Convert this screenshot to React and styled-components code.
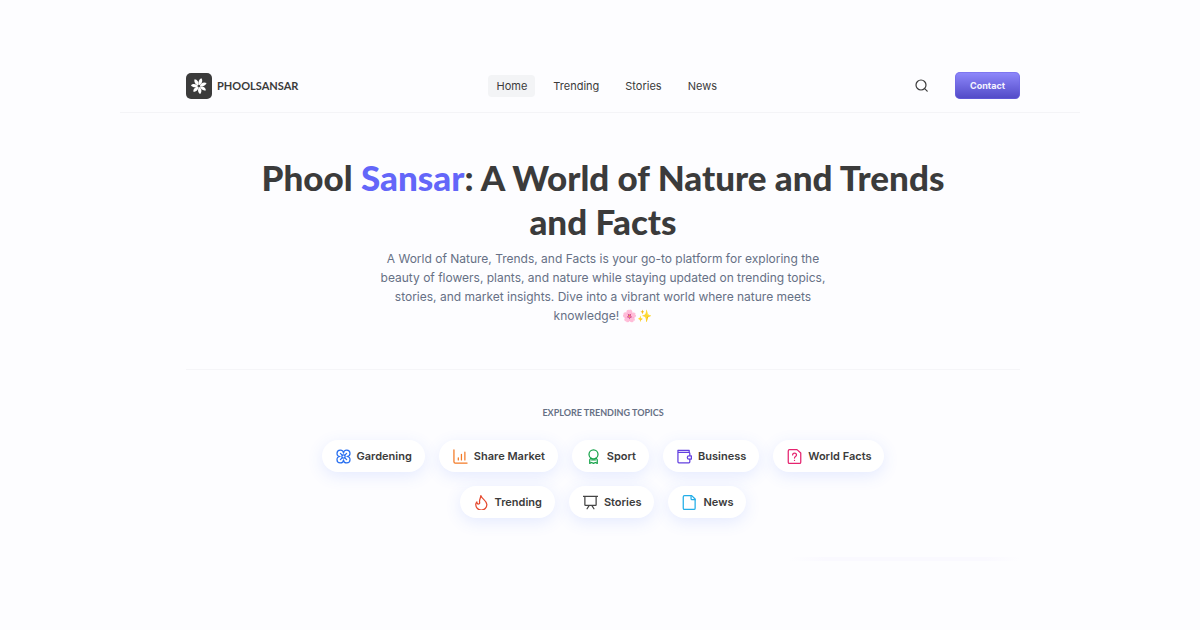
import React from "react";
import styled, { createGlobalStyle } from "styled-components";

const ink = "#3b3b3b";
const body = `"Inter", "Liberation Sans", sans-serif`;
const display = `"Lato", "Liberation Sans", sans-serif`;

const GlobalStyle = createGlobalStyle`
  * { box-sizing: border-box; }
  body {
    margin: 0;
    background: #fdfdff;
    color: ${ink};
    font-family: ${body};
  }
  a { color: inherit; text-decoration: none; }
`;

const Page = styled.div`
  width: 80%;
  margin: 0 auto;
  padding-top: 59px;
`;

const Header = styled.header`
  display: flex;
  align-items: center;
  justify-content: space-between;
  padding: 13px 60px 13px 66px;
  border-bottom: 1px solid #f4f4f7;
`;

const Brand = styled.a`
  display: flex;
  align-items: center;
  gap: 5px;
  font: 700 11px/16px ${display};
`;

const Logo = styled.span`
  display: grid;
  place-items: center;
  width: 26px;
  height: 26px;
  border-radius: 5px;
  background: ${ink};
`;

const Nav = styled.nav`
  display: flex;
  gap: 10px;
`;

const NavLink = styled.a`
  padding: 3px 8px;
  border-radius: 4px;
  font-size: 11px;
  line-height: 16px;
  background: ${(p) => (p.$active ? "#f3f4f6" : "transparent")};
`;

const Actions = styled.div`
  display: flex;
  align-items: center;
  gap: 27px;
`;

const IconButton = styled.button`
  display: flex;
  padding: 0;
  border: 0;
  background: none;
  color: ${ink};
  cursor: pointer;
`;

const ContactButton = styled.button`
  padding: 0 15px;
  height: 27px;
  border: 0;
  border-radius: 5px;
  background: linear-gradient(#8f89fc, #5149c6);
  box-shadow: inset 0 0 0 1px rgba(110, 100, 230, 0.5);
  color: #f5f4ff;
  font: 700 9px/14px ${body};
  cursor: pointer;
`;

const Content = styled.main`
  padding: 0 60px 0 66px;
`;

const Hero = styled.section`
  display: flex;
  flex-direction: column;
  align-items: center;
  gap: 6px;
  padding: 42px 0 44px;
  border-bottom: 1px solid #f5f5f8;
  text-align: center;
`;

const Title = styled.h1`
  max-width: 720px;
  margin: 0;
  font: 900 35px/44px ${display};
`;

const Accent = styled.span`
  color: #6366f9;
`;

const Lead = styled.p`
  max-width: 456px;
  margin: 0;
  color: #667085;
  font-size: 12px;
  line-height: 19px;
`;

const Topics = styled.section`
  display: flex;
  flex-direction: column;
  align-items: center;
  gap: 21px;
  padding: 37px 0 39px;
`;

const TopicsTitle = styled.h2`
  margin: 0;
  color: #667085;
  font: 700 9px/12px ${display};
  text-transform: uppercase;
`;

const ChipList = styled.ul`
  display: flex;
  flex-wrap: wrap;
  justify-content: center;
  gap: 14px;
  max-width: 600px;
  margin: 0;
  padding: 0;
  list-style: none;
`;

const Chip = styled.a`
  display: flex;
  align-items: center;
  gap: 6px;
  height: 32px;
  padding: 0 13px 0 14px;
  border-radius: 16px;
  background: #fff;
  box-shadow: 0 4px 16px rgba(60, 110, 255, 0.13);
  font-size: 11px;
  font-weight: 600;
  line-height: 16px;
`;

const ChipIcon = styled.svg`
  width: 15px;
  height: 15px;
  fill: none;
  stroke: ${(p) => p.$color};
  stroke-width: 2;
  stroke-linecap: round;
  stroke-linejoin: round;
`;

const NextPanelEdge = styled.div`
  width: 230px;
  height: 4px;
  margin-left: auto;
  background: linear-gradient(90deg, transparent, #faf9ff 15%, #faf9ff 85%, transparent);
`;

const topics = [
  {
    name: "Gardening",
    color: "#2970f0",
    icon: (
      <>
        <path d="M12 6.500A5.200 5.200 0 1 0 6.500 12A5.200 5.200 0 1 0 12 17.500A5.200 5.200 0 1 0 17.500 12A5.200 5.200 0 1 0 12 6.500Z" />
        <path d="M7 7l3 3M17 7l-3 3M7 17l3-3M17 17l-3-3" />
        <circle cx="12" cy="12" r="2.600" />
      </>
    ),
  },
  {
    name: "Share Market",
    color: "#f37a26",
    icon: <path d="M1.500 1.500v19a2 2 0 0 0 2 2h19M8.500 17.500v-3.500M13.500 17.500V8.500M19 17.500V5" />,
  },
  {
    name: "Sport",
    color: "#16a34a",
    icon: (
      <>
        <circle cx="12" cy="8.500" r="7.200" />
        <path d="M8 14.500 6 17v6l3-1.500 3 1.500 3-1.500 3 1.500v-6l-2-2.500M9 17.500h6" />
      </>
    ),
  },
  {
    name: "Business",
    color: "#6340e0",
    icon: (
      <>
        <path d="M20.500 10.500V7a1.500 1.500 0 0 0-1.500-1.500H2M2 2h17.500v3M1.500 2v18.500A1.500 1.500 0 0 0 3 22h16a1.500 1.500 0 0 0 1.500-1.500v-4" />
        <path d="M23 11h-4a2.500 2.500 0 0 0 0 5h4Z" />
      </>
    ),
  },
  {
    name: "World Facts",
    color: "#e5246f",
    icon: (
      <>
        <path d="M16 1H4a2 2 0 0 0-2 2v18a2 2 0 0 0 2 2h16a2 2 0 0 0 2-2V6.500Z" />
        <path d="M9 9.500C9 7.500 10.300 6.500 12 6.500s3.200 1.200 3.200 3c0 2.500-3.200 2.500-3.200 5M12 18v.200" />
      </>
    ),
  },
  {
    name: "Trending",
    color: "#e5482d",
    icon: (
      <path d="M11 1c-.5 4.500-3 6.500-2 11 .5 2.500-2.500 3.500-4 1-.3-.6-.4-1.200-.4-2-1 1-1.800 2.600-1.800 4.300a8.900 8.900 0 0 0 17.800 0C20.600 9 13 7 11 1Z" />
    ),
  },
  {
    name: "Stories",
    color: "#444",
    icon: <path d="M.8 2h22.400M3 2v13.500a1 1 0 0 0 1 1h16a1 1 0 0 0 1-1V2M10 16.500 6.500 22M14 16.500l3.500 5.500" />,
  },
  {
    name: "News",
    color: "#22ade8",
    icon: (
      <>
        <path d="M15.500 1H4a2 2 0 0 0-2 2v18a2 2 0 0 0 2 2h15a2 2 0 0 0 2-2V6.500Z" />
        <path d="M14.500 1v5a1.500 1.500 0 0 0 1.500 1.500h5" />
      </>
    ),
  },
];

const petals = [15, 66, 118, 169, 221, 272, 324];

function FlowerMark() {
  return (
    <svg width="18" height="18" viewBox="0 0 24 24" aria-hidden="true">
      {petals.map((angle) => (
        <path
          key={angle}
          fill="#fff"
          transform={`rotate(${angle} 12 12)`}
          d="M12 11C9.500 8.500 9 4 12.500 1.200c2.800 2.400 2.600 6.600-.5 9.800Z"
        />
      ))}
      <circle cx="12" cy="12" r="1.300" fill={ink} />
    </svg>
  );
}

function SearchIcon() {
  return (
    <svg width="13" height="13" viewBox="0 0 13 13" fill="none" stroke="currentColor" strokeLinecap="round">
      <circle cx="6" cy="6" r="5" strokeWidth="1.200" />
      <path d="m9.700 9.700 2.500 2.500" strokeWidth="1.200" />
    </svg>
  );
}

export default function App() {
  return (
    <>
      <GlobalStyle />
      <Page>
        <Header>
          <Brand href="#">
            <Logo>
              <FlowerMark />
            </Logo>
            PHOOLSANSAR
          </Brand>
          <Nav>
            <NavLink href="#" $active aria-current="page">Home</NavLink>
            <NavLink href="#trending">Trending</NavLink>
            <NavLink href="#stories">Stories</NavLink>
            <NavLink href="#news">News</NavLink>
          </Nav>
          <Actions>
            <IconButton type="button" aria-label="Search">
              <SearchIcon />
            </IconButton>
            <ContactButton type="button">Contact</ContactButton>
          </Actions>
        </Header>
        <Content>
          <Hero>
            <Title>
              Phool <Accent>Sansar</Accent>: A World of Nature and Trends and Facts
            </Title>
            <Lead>
              A World of Nature, Trends, and Facts is your go-to platform for exploring the beauty of
              flowers, plants, and nature while staying updated on trending topics, stories, and market
              insights. Dive into a vibrant world where nature meets knowledge! 🌸✨
            </Lead>
          </Hero>
          <Topics>
            <TopicsTitle>Explore trending topics</TopicsTitle>
            <ChipList>
              {topics.map((topic) => (
                <li key={topic.name}>
                  <Chip href={`#${topic.name.toLowerCase().replace(" ", "-")}`}>
                    <ChipIcon viewBox="0 0 24 24" $color={topic.color} aria-hidden="true">
                      {topic.icon}
                    </ChipIcon>
                    {topic.name}
                  </Chip>
                </li>
              ))}
            </ChipList>
          </Topics>
          <NextPanelEdge />
        </Content>
      </Page>
    </>
  );
}
